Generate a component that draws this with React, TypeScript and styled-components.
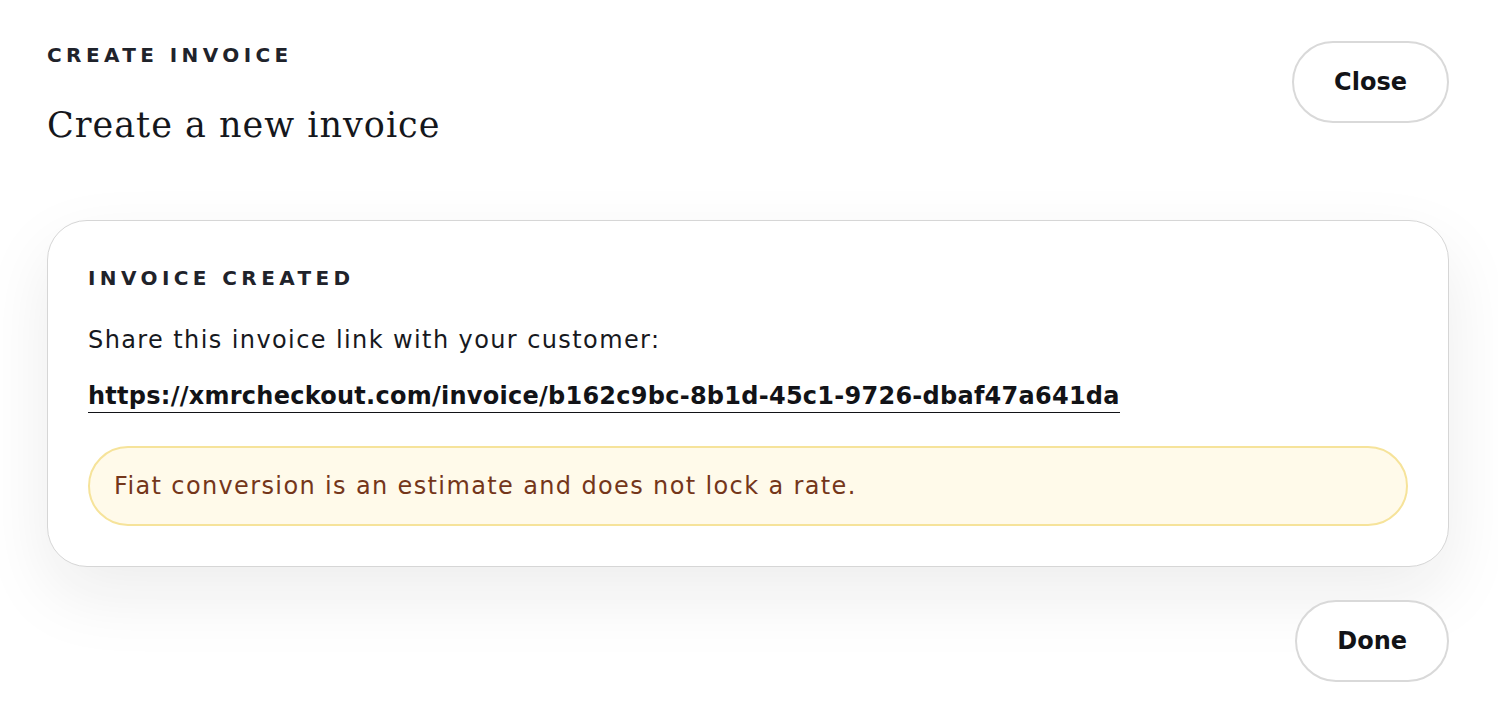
import React from "react";
import styled, { createGlobalStyle } from "styled-components";

const SANS = `"DejaVu Sans", "Noto Sans", sans-serif`;

const Global = createGlobalStyle`
  html, body { margin: 0; padding: 0; background: #ffffff; }
  body { font-family: ${SANS}; color: #16181d; -webkit-font-smoothing: antialiased; }
  * { box-sizing: border-box; }
`;

const Page = styled.div`
  padding: 41px 49px 40px 47px;
  display: flex;
  flex-direction: column;
`;

const Header = styled.header`
  display: flex;
  justify-content: space-between;
  align-items: flex-start;
`;

const TitleBlock = styled.div`
  display: flex;
  flex-direction: column;
  padding-top: 2px;
`;

const Eyebrow = styled.div`
  font-family: ${SANS};
  font-size: 20px;
  line-height: 24px;
  font-weight: 700;
  letter-spacing: 4.4px;
  text-transform: uppercase;
  color: #1f232b;
`;

const Title = styled.h1`
  margin: 36px 0 0;
  font-family: "DejaVu Serif", "Liberation Serif", serif;
  font-weight: 400;
  font-size: 35px;
  line-height: 44px;
  letter-spacing: 1px;
  color: #15171c;
`;

const PillButton = styled.button`
  height: 82px;
  padding: 0 40px;
  border: 2px solid #d9d9d9;
  border-radius: 999px;
  background: #ffffff;
  font-family: ${SANS};
  font-size: 24px;
  font-weight: 700;
  color: #121317;
  cursor: pointer;
`;

const Card = styled.section`
  margin-top: 73px;
  border: 1.5px solid #d6d6d6;
  border-radius: 40px;
  background: #ffffff;
  padding: 45px 40px 40px;
  box-shadow: 0 28px 70px rgba(20, 20, 20, 0.08);
  display: flex;
  flex-direction: column;
  align-items: flex-start;
`;

const BodyText = styled.p`
  margin: 34px 0 0;
  font-size: 24px;
  line-height: 32px;
  letter-spacing: 1.4px;
  color: #17191e;
`;

const InvoiceLink = styled.a`
  margin-top: 24px;
  display: inline-block;
  font-size: 24px;
  line-height: 32px;
  font-weight: 700;
  letter-spacing: 0.26px;
  color: #121317;
  text-decoration: none;
  border-bottom: 1.5px solid #121317;
`;

const Notice = styled.div`
  margin-top: 33px;
  align-self: stretch;
  height: 80px;
  display: flex;
  align-items: center;
  padding: 0 24px;
  border: 2px solid #f6e39a;
  border-radius: 999px;
  background: #fffaea;
  color: #74361a;
  font-size: 24px;
  letter-spacing: 1.37px;
`;

const Footer = styled.footer`
  margin-top: 33px;
  display: flex;
  justify-content: flex-end;
`;

export default function App() {
  const url = "https://xmrcheckout.com/invoice/b162c9bc-8b1d-45c1-9726-dbaf47a641da";
  return (
    <>
      <Global />
      <Page>
        <Header>
          <TitleBlock>
            <Eyebrow>Create invoice</Eyebrow>
            <Title>Create a new invoice</Title>
          </TitleBlock>
          <PillButton>Close</PillButton>
        </Header>
        <Card>
          <Eyebrow>Invoice created</Eyebrow>
          <BodyText>Share this invoice link with your customer:</BodyText>
          <InvoiceLink href={url}>{url}</InvoiceLink>
          <Notice>Fiat conversion is an estimate and does not lock a rate.</Notice>
        </Card>
        <Footer>
          <PillButton>Done</PillButton>
        </Footer>
      </Page>
    </>
  );
}
